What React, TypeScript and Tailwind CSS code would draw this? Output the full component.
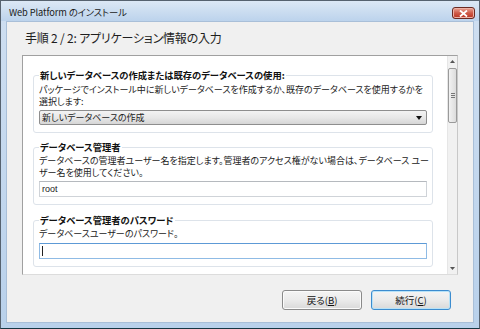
import React from "react";

const jp = "font-['Noto_Sans_CJK_JP','Noto_Sans',sans-serif] [font-feature-settings:'palt']";

const GroupBox = ({
    title,
    className,
    children,
}: {
    title: string;
    className?: string;
    children: React.ReactNode;
}) => (
    <fieldset className={`min-w-0 rounded-[3px] border border-[#dde3ea] px-[5px] pb-[7px] ${className ?? ""}`}>
        <legend className="px-[1px] text-[9.3px] leading-[13px] font-bold text-[#111]">{title}</legend>
        {children}
    </fieldset>
);

const Button = ({ label, keyChar, primary }: { label: string; keyChar: string; primary?: boolean }) => (
    <div
        className={`flex h-[20px] w-[80px] items-center justify-center rounded-[3px] border bg-gradient-to-b from-[#f4f4f4] via-[#ebebeb] to-[#d9d9d9] text-[9.5px] text-[#111] ${
            primary
                ? "border-[#3c8ccf] shadow-[inset_0_0_0_1px_#b7e2f8]"
                : "border-[#8a8a8a] shadow-[inset_0_0_0_1px_#fbfbfb]"
        }`}
    >
        {label}(<span className="underline underline-offset-1">{keyChar}</span>)
    </div>
);

export default function App() {
    return (
        <div className={`${jp} flex h-[329px] w-[480px] flex-col border border-[#56626f] border-b-[#163744] bg-gradient-to-b from-[#cfdff1] to-[#b9d1eb]`}>
            {/* title bar */}
            <div className="flex h-[20px] shrink-0 items-start justify-between bg-gradient-to-b from-[#dce8f5] to-[#bcd3ec] pl-[8px] pr-[4px]">
                <span className="pt-[5px] text-[9.3px] leading-[13px] tracking-[-0.1px] text-[#1b1b1b]">Web Platform のインストール</span>
                <div className="mt-[6px] flex h-[12px] w-[23px] items-center justify-center rounded-[3px] border border-[#6a2a22] bg-gradient-to-b from-[#e8a496] via-[#cf5a48] to-[#b8321f] shadow-[inset_0_0_0_1px_#eeb1a5]">
                    <svg width="9" height="7" viewBox="0 0 9 7">
                        <path d="M1 0.5 L8 6.5 M8 0.5 L1 6.5" stroke="#fff" strokeWidth="1.8" />
                    </svg>
                </div>
            </div>

            {/* client area */}
            <div className="mx-[5px] mb-[5px] flex flex-1 flex-col border border-[#a9bfd8] bg-[#f0f0f0]">
                <h1 className="pl-[18px] pt-[7px] text-[12px] leading-[17px] tracking-[-0.2px] text-[#1e1e1e]">
                    手順 2 / 2: アプリケーション情報の入力
                </h1>

                {/* scroll panel */}
                <div className="mx-[15px] mt-[9px] flex h-[220px] border border-[#a0a0a0] border-b-[#dcdcdc] border-r-[#c8c8c8] bg-white">
                    <div className="min-w-0 flex-1 overflow-hidden pl-[10px] pr-[14px] pt-[13px] text-[9px] leading-[12px] text-[#222]">
                        <GroupBox title="新しいデータベースの作成または既存のデータベースの使用:">
                            <p className="mt-[2px] whitespace-nowrap">
                                パッケージでインストール中に新しいデータベースを作成するか、既存のデータベースを使用するかを
                                <br />
                                選択します:
                            </p>
                            <div className="mt-[2px] flex h-[15px] items-center justify-between rounded-[2px] border border-[#8e8e8e] bg-gradient-to-b from-[#f3f3f3] via-[#e8e8e8] to-[#d6d6d6] pl-[2px] pr-[4px]">
                                <span>新しいデータベースの作成</span>
                                <svg width="6" height="4" viewBox="0 0 6 4">
                                    <path d="M0 0 H6 L3 4 Z" fill="#111" />
                                </svg>
                            </div>
                        </GroupBox>

                        <GroupBox title="データベース管理者" className="mt-[8px]">
                            <p className="mt-[1px] whitespace-nowrap">
                                データベースの管理者ユーザー名を指定します。管理者のアクセス権がない場合は、データベース ユー
                                <br />
                                ザー名を使用してください。
                            </p>
                            <div className="mt-[2px] flex h-[16px] items-center border border-[#cfd3d8] border-t-[#b5b9be] bg-white pl-[2px] font-['Liberation_Sans',sans-serif] text-[9px]">
                                root
                            </div>
                        </GroupBox>

                        <GroupBox title="データベース管理者のパスワード" className="mt-[9px]">
                            <p className="mt-[1px] whitespace-nowrap">データベースユーザーのパスワード。</p>
                            <div className="mt-[3px] flex h-[16px] items-center border border-[#8fbbe5] border-t-[#5d9ad6] bg-white pl-[2px]">
                                <div className="h-[10px] w-[1px] bg-[#222]" />
                            </div>
                        </GroupBox>
                    </div>

                    {/* scrollbar */}
                    <div className="flex w-[10px] shrink-0 flex-col items-center border-l border-[#e6e6e6] bg-[#f1f1f1]">
                        <svg className="mt-[4px]" width="5" height="3" viewBox="0 0 5 3">
                            <path d="M0 3 L2.5 0 L5 3 Z" fill="#555" />
                        </svg>
                        <div className="mt-[5px] flex h-[55px] w-[9px] items-center justify-center rounded-[2px] border border-[#9a9a9a] bg-gradient-to-r from-[#f2f2f2] to-[#dcdcdc]">
                            <div className="flex flex-col gap-[1px]">
                                <div className="h-[1px] w-[4px] bg-[#777]" />
                                <div className="h-[1px] w-[4px] bg-[#777]" />
                                <div className="h-[1px] w-[4px] bg-[#777]" />
                            </div>
                        </div>
                        <div className="flex-1" />
                        <svg className="mb-[4px]" width="5" height="3" viewBox="0 0 5 3">
                            <path d="M0 0 H5 L2.5 3 Z" fill="#555" />
                        </svg>
                    </div>
                </div>

                {/* buttons */}
                <div className="mr-[22px] mt-[15px] flex justify-end gap-[9px]">
                    <Button label="戻る" keyChar="B" />
                    <Button label="続行" keyChar="C" primary />
                </div>
            </div>
        </div>
    );
}
